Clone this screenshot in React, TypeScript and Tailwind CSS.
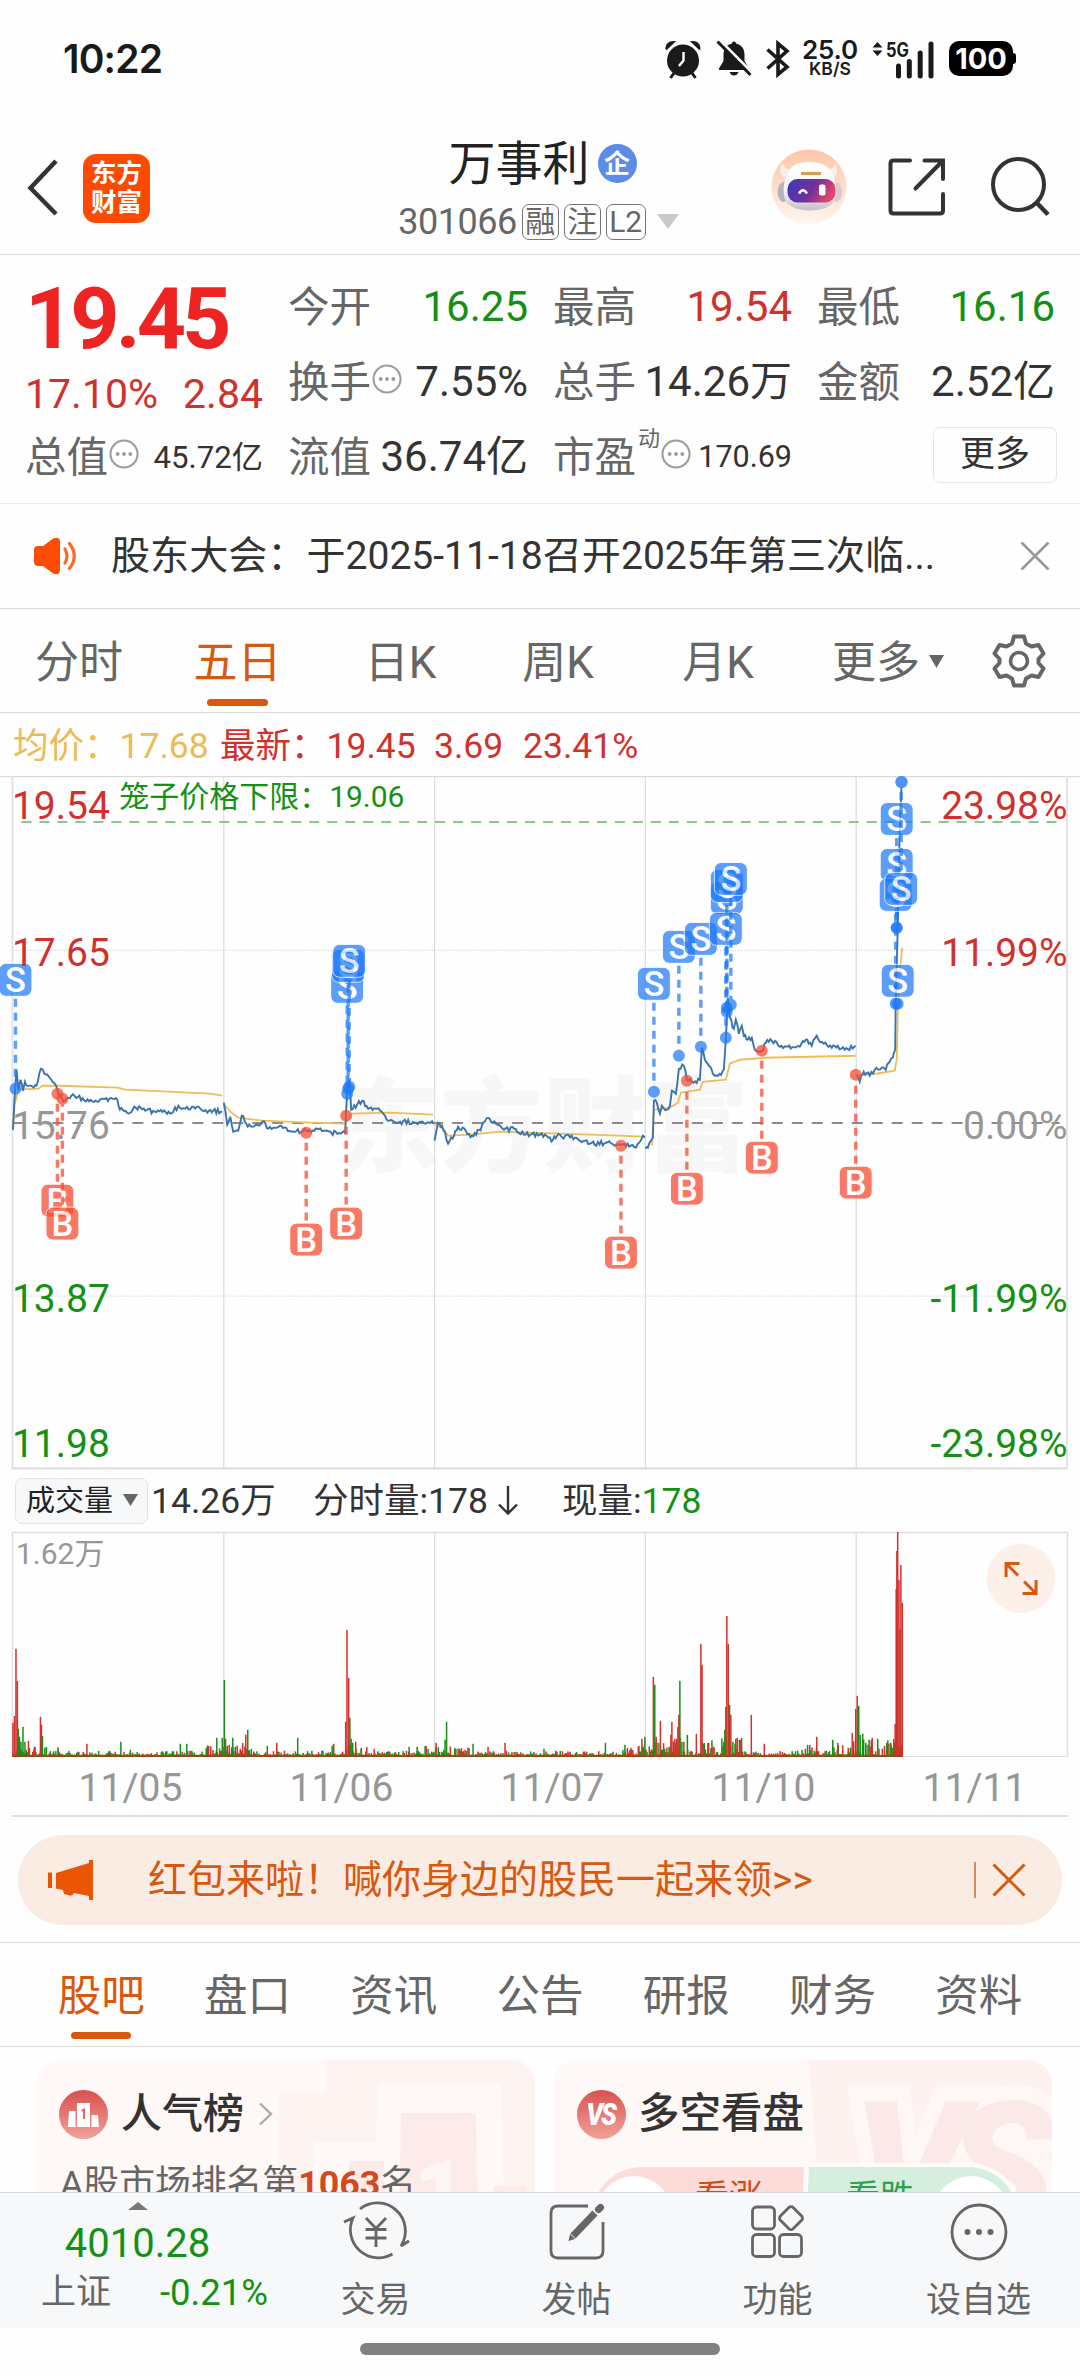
import React from "react";

const FONT = "font-[Roboto,'Noto_Sans_CJK_SC',sans-serif]";
const RED = "#d0312d";
const GREEN = "#149114";

/* Deterministic pseudo random numbers in the range 0..1 */
function rng(seed: number) {
  let s = seed;
  return () => {
    s = (s * 1664525 + 1013904223) % 4294967296;
    return s / 4294967296;
  };
}

/* Turns sparse key points into a minute-by-minute price path */
function jagged(points: number[][], seed: number, amp: number) {
  const rand = rng(seed);
  const out: string[] = [];
  for (let i = 0; i < points.length - 1; i++) {
    const [x0, y0] = points[i];
    const [x1, y1] = points[i + 1];
    const n = Math.max(1, Math.round((x1 - x0) / 1.6));
    for (let k = 0; k < n; k++) {
      const t = k / n;
      const noise = k === 0 ? 0 : (rand() - 0.5) * amp;
      out.push(`${(x0 + (x1 - x0) * t).toFixed(1)},${(y0 + (y1 - y0) * t + noise).toFixed(1)}`);
    }
  }
  const last = points[points.length - 1];
  out.push(`${last[0]},${last[1]}`);
  return out.join(" ");
}

const PRICE: number[][][] = [
  [[12.5, 1130], [14, 1100], [16, 1070], [18, 1090], [20, 1080], [22.5, 1091], [24.5, 1082], [27, 1086], [32, 1087], [36, 1086], [40.5, 1069], [44, 1074], [47, 1075], [52, 1082], [57, 1090], [63, 1102], [68, 1098], [74, 1096], [84, 1101], [95, 1101], [117, 1100], [119.5, 1110], [130, 1113], [134, 1107], [145, 1111], [173, 1112], [178, 1106], [185, 1109], [200, 1109], [207, 1113], [213, 1111], [222, 1112]],
  [[223.5, 1103], [227, 1125], [230, 1117], [233, 1132], [238, 1131], [241.5, 1116], [246, 1124], [252, 1127], [262, 1122], [268, 1129], [281, 1126], [291, 1132], [306, 1131], [325, 1131], [331, 1133], [345, 1133], [346, 1110], [347.5, 1085], [349.5, 1082], [351, 1110], [357, 1105], [362, 1101], [368, 1109], [380, 1111], [388, 1121], [400, 1122], [416, 1123], [433.5, 1124]],
  [[434.5, 1141], [438, 1123], [442, 1126], [448, 1144], [454, 1136], [458, 1127], [472, 1136], [476, 1135], [488, 1118], [496, 1124], [504, 1130], [514, 1129], [524, 1135], [540, 1135], [553, 1140], [557, 1136], [575, 1138], [590, 1144], [606, 1143], [621, 1145], [636, 1148], [643, 1136], [645, 1138]],
  [[645.5, 1149], [648, 1148], [651, 1141], [653, 1138], [654, 1101], [657, 1103], [660, 1114], [662, 1106], [667, 1110], [670, 1106], [672, 1091], [676, 1094], [679, 1069], [684, 1066], [687, 1080], [692, 1082], [700, 1080], [702, 1048], [705, 1060], [709, 1066], [713, 1074], [720, 1074], [724, 1070], [726, 1040], [728, 998], [730, 1018], [734, 1029], [736, 1020], [739, 1034], [742, 1026], [744, 1036], [748, 1040], [752, 1038], [755, 1050], [762, 1051], [766, 1043], [772, 1041], [780, 1047], [788, 1047], [800, 1047], [806, 1040], [812, 1046], [817, 1036], [824, 1044], [832, 1048], [838, 1046], [845, 1050], [856, 1046]],
  [[857, 1075], [860, 1082], [864, 1072], [870, 1076], [875, 1070], [882, 1068], [886, 1070], [890, 1062], [893, 1058], [895.5, 1050], [896, 1005], [898, 930], [900, 830], [902, 782]],
];

const AVERAGE = [
  "12.5,1130 14,1105 18,1090 38,1089 42,1086 60,1086 117,1088 125,1090 210,1094 222,1096",
  "223.5,1104 230,1112 238,1118 262,1121 310,1123 345,1124 351,1114 390,1113 433,1115",
  "434.5,1124 444,1130 448,1136 470,1135 500,1132 590,1135 645,1137",
  "652,1146 654,1110 670,1108 678,1103 681,1093 700,1090 703,1082 726,1080 730,1064 740,1060 765,1058 856,1056",
  "857,1076 864,1075 876,1074 895,1071 897,1060 899,980 902.5,948",
];

type Marker = { x: number; y: number; dot: number };
const SELLS: Marker[] = [
  { x: 15, y: 980, dot: 1089 },
  { x: 347, y: 987, dot: 1094 },
  { x: 348, y: 966, dot: 1089 },
  { x: 349, y: 961, dot: 1087 },
  { x: 654, y: 984, dot: 1092 },
  { x: 679, y: 947, dot: 1056 },
  { x: 701, y: 939, dot: 1047 },
  { x: 727, y: 898, dot: 1008 },
  { x: 726, y: 929, dot: 1038 },
  { x: 727, y: 886, dot: 1012 },
  { x: 731, y: 879, dot: 1005 },
  { x: 897, y: 819, dot: 928 },
  { x: 897, y: 865, dot: 928 },
  { x: 896, y: 895, dot: 1004 },
  { x: 901.5, y: 889, dot: 782 },
  { x: 898, y: 981, dot: 1004 },
];
const BUYS: Marker[] = [
  { x: 57, y: 1201, dot: 1094 },
  { x: 62, y: 1224, dot: 1099 },
  { x: 306, y: 1240, dot: 1133 },
  { x: 346, y: 1224, dot: 1116 },
  { x: 621, y: 1253, dot: 1146 },
  { x: 687, y: 1189, dot: 1081 },
  { x: 762, y: 1158, dot: 1051 },
  { x: 856, y: 1183, dot: 1075 },
];

function TradeMarker({ m, kind }: { m: Marker; kind: "S" | "B" }) {
  const color = kind === "S" ? "#1f7af9" : "#f84c33";
  const edge = m.dot > m.y ? m.y + 19 : m.y - 19;
  return (
    <g opacity={kind === "S" ? 0.72 : 0.74}>
      <line x1={m.x} x2={m.x} y1={edge} y2={m.dot} stroke={color} strokeWidth="3.4" strokeDasharray="8 6" />
      <circle cx={m.x} cy={m.dot} r="6" fill={color} />
      <rect x={m.x - 16.5} y={m.y - 16.5} width="33" height="33" rx="7" fill={color} stroke="#fff" strokeWidth="1" />
      <text x={m.x} y={m.y + 12.3} textAnchor="middle" fontSize="34.5" fontWeight="500" fill="#fff">
        {kind}
      </text>
    </g>
  );
}

const DAY_LINES = [223.5, 434.5, 645.5, 856.5];

function PriceChart() {
  const labels: [string, string, number, string][] = [
    ["19.54", "23.98%", 819, RED],
    ["17.65", "11.99%", 966, RED],
    ["15.76", "0.00%", 1139, "#979797"],
    ["13.87", "-11.99%", 1312, GREEN],
    ["11.98", "-23.98%", 1458, GREEN],
  ];
  return (
    <svg className="block h-[694px] w-[1080px]" viewBox="0 776 1080 694">
      <text x="337" y="1164" fontSize="103" fontWeight="900" fill="#f7f7f7">东方财富</text>
      <g stroke="#dcdcdc" strokeWidth="1.2">
        {DAY_LINES.map((x) => (
          <line key={x} x1={x} x2={x} y1="776" y2="1469" />
        ))}
        <line x1="12" x2="1068" y1="950.5" y2="950.5" strokeDasharray="1.5 1.5" />
        <line x1="12" x2="1068" y1="1296.5" y2="1296.5" strokeDasharray="1.5 1.5" />
      </g>
      <path d="M0 776.5H1080" stroke="#dadada" strokeWidth="1.4" />
      <path d="M12 776V1469M1067.5 776V1469" stroke="#e2e2e2" strokeWidth="1.8" />
      <path d="M12 1469H1068" stroke="#d6d6d6" strokeWidth="1.8" />
      <line x1="12" x2="1060" y1="1123.3" y2="1123.3" stroke="#8b8b8b" strokeWidth="1.8" strokeDasharray="11 9" />
      <line x1="21" x2="1058" y1="822" y2="822" stroke="#69b169" strokeWidth="1.6" strokeDasharray="10 8" />
      {AVERAGE.map((p) => (
        <polyline key={p} points={p} fill="none" stroke="#eebd57" strokeWidth="1.8" />
      ))}
      {PRICE.map((p, i) => (
        <polyline key={i} points={jagged(p, 17 + i * 31, 5)} fill="none" stroke="#3a74ad" strokeWidth="1.9" />
      ))}
      {SELLS.map((m, i) => (
        <TradeMarker key={i} m={m} kind="S" />
      ))}
      <circle cx="902" cy="782" r="6" fill="#4d92f5" />
      {BUYS.map((m, i) => (
        <TradeMarker key={i} m={m} kind="B" />
      ))}
      {labels.map(([price, pct, y, color]) => (
        <g key={price} fontSize="39" fill={color}>
          <text x="11.5" y={y}>{price}</text>
          <text x="1068" y={y} textAnchor="end">{pct}</text>
        </g>
      ))}
      <text x="119" y="807.5" fontSize="30" fill={GREEN}>笼子价格下限：19.06</text>
    </svg>
  );
}

/* x, height, colour (1 = up, 0 = down) */
const SPIKES: [number, number, number][] = [
  [12.5, 34, 1], [14, 41, 1], [17.8, 28, 0], [16.9, 76, 1], [15.5, 108, 1], [19, 20, 0], [20.5, 15, 0], [22.5, 30, 0], [24.5, 15, 0], [28, 16, 1], [34, 10, 1], [40, 40, 1], [41, 32, 1], [42, 21, 0], [46, 10, 0], [58, 7, 0], [86.5, 13, 1], [120.5, 15, 0], [130, 7, 0], [180, 13, 0], [186.5, 13, 0], [206, 9, 0], [216.5, 19, 0], [222, 19, 0], [224, 77, 0], [225.3, 18, 1], [229, 12, 1], [232.5, 19, 0], [235, 10, 0], [240, 8, 1], [245.5, 22, 1], [247.5, 27, 0], [251, 8, 0], [267, 11, 0], [276.5, 14, 1], [297.5, 19, 0], [332, 11, 0], [333.5, 13, 1], [345.5, 35, 1], [346.8, 127, 1], [348.5, 79, 1], [349.7, 39, 0], [351, 18, 0], [352.5, 14, 0], [355.5, 15, 1], [361, 8, 0], [374, 8, 1], [409, 10, 0], [417, 10, 0], [428, 8, 0], [436, 14, 1], [445, 17, 0], [446.5, 35, 0], [465, 7, 1], [473, 13, 0], [488, 10, 1], [505, 14, 1], [516, 5, 0],
  [544, 8, 0], [556, 6, 1], [605.5, 14, 0], [625, 12, 0], [631, 9, 1], [639, 11, 1], [642, 18, 1], [645, 20, 0], [653.5, 80, 1], [654.9, 72, 0], [656.3, 20, 1], [660.5, 36, 1], [671, 22, 1], [672, 35, 1], [675, 18, 1], [678, 30, 1], [679, 42, 1], [680, 76, 0], [682, 15, 0], [684, 15, 1], [687.5, 22, 0], [696.5, 23, 1], [702.2, 92, 1], [701, 113, 1], [704, 13, 0], [708, 14, 1], [724, 15, 1], [725, 27, 0], [726, 50, 1], [728.4, 113, 1], [727, 141, 1], [729.7, 52, 0], [731, 42, 1], [733, 15, 0], [736, 18, 1], [741, 17, 1], [751.5, 42, 1], [764.5, 13, 1], [817, 20, 1], [833, 17, 0], [838, 14, 1], [852.5, 24, 1], [856, 48, 1], [857.5, 61, 1], [859, 51, 0], [860.5, 22, 0], [863, 23, 0], [866, 14, 0], [872.5, 19, 1], [878, 18, 0], [891, 14, 0], [894, 18, 1], [895.5, 33, 1], [896.5, 168, 1], [897.2, 206, 1], [898, 225, 1], [899.3, 177, 1], [902.6, 154, 1], [901.2, 192, 1],
];

/* Busy stretches of the session: start, end, typical height */
const BUSY: [number, number, number][] = [
  [12, 60, 9], [200, 223, 11], [223, 250, 11], [345, 370, 9], [425, 470, 8], [620, 646, 8], [646, 690, 16], [700, 716, 14], [722, 742, 16], [800, 856, 10], [840, 904, 14],
];

function baseVolume() {
  const rand = rng(91);
  const bars: [number, number, number][] = [];
  for (let x = 12.5; x < 903; x += 1.1) {
    let top = 3.8;
    for (const [a, b, h] of BUSY) if (x >= a && x <= b) top = Math.max(top, h);
    const r = rand();
    bars.push([x, 1.8 + top * r * r * 1.15, rand() > 0.5 ? 1 : 0]);
  }
  return bars;
}

function VolumeChart() {
  return (
    <svg className="block h-[227px] w-[1080px]" viewBox="0 1531 1080 227">
      <g stroke="#dcdcdc" strokeWidth="1.2">
        {DAY_LINES.map((x) => (
          <line key={x} x1={x} x2={x} y1="1532" y2="1757" />
        ))}
      </g>
      <path d="M12 1532.5H1068V1757H12Z" fill="none" stroke="#e0e0e0" strokeWidth="1.6" />
      {[...baseVolume(), ...SPIKES].map(([x, h, up], i) => (
        <rect key={i} x={x - 0.75} y={1757 - h} width="1.5" height={h} fill={up ? "#d62f2b" : "#159015"} />
      ))}
      <rect x="899.6" y="1629" width="1.5" height="128" fill="#b2401d" />
      <path d="M12 1756.5H903" stroke="#8a4a1a" strokeWidth="1.6" />
      <text x="15.5" y="1564" fontSize="30" fill="#979797">1.62万</text>
      <circle cx="1021.5" cy="1578.5" r="34.5" fill="#fdf0e8" />
      <path d="M1006.5 1577V1563.5H1020M1006.5 1563.5L1018.5 1575.5M1036.5 1580V1593.5H1023M1036.5 1593.5L1024.5 1581.5" fill="none" stroke="#d9580f" strokeWidth="3" />
    </svg>
  );
}

function InfoDot({ className = "" }: { className?: string }) {
  return (
    <svg className={`h-[30px] w-[30px] shrink-0 ${className}`} viewBox="0 0 30 30">
      <circle cx="15" cy="15" r="13.5" fill="none" stroke="#9b9b9b" strokeWidth="2" />
      <g fill="#9b9b9b">
        <circle cx="8.7" cy="15" r="1.9" />
        <circle cx="15" cy="15" r="1.9" />
        <circle cx="21.3" cy="15" r="1.9" />
      </g>
    </svg>
  );
}

function StatusBar() {
  return (
    <div className="flex h-[118px] items-center justify-between pr-[65px] pl-[63px] text-[#1a1a1a]">
      <div className="font-[Inter,sans-serif] text-[39px] leading-none font-semibold tracking-[-0.8px]">10:22</div>
      <div className="flex h-[40px] items-center">
        <svg className="h-[40px] w-[38px]" viewBox="0 0 38 40">
          <circle cx="19" cy="21.5" r="16" fill="#1a1a1a" />
          <path d="M1.500 10.500C1 4 6 .8 12 2.200L2.800 11ZM36.500 10.500C37 4 32 .8 26 2.200L35.200 11Z" fill="#1a1a1a" />
          <path d="M10 34L6.500 39M28 34L31.500 39" stroke="#1a1a1a" strokeWidth="3" />
          <path d="M19.500 13V21.500L15 27" fill="none" stroke="#fff" strokeWidth="2.400" />
        </svg>
        <svg className="ml-[14px] h-[40px] w-[36px]" viewBox="0 0 36 40">
          <path d="M18 2.500C19.500 2.500 20 3.500 20 4.500C26 6 28.500 10 28.500 16V22L33 29.500V31H3V29.500L7.500 22V16C7.500 10 10 6 16 4.500C16 3.500 16.500 2.500 18 2.500Z" fill="#1a1a1a" />
          <path d="M13.500 33H22.500Q21 36.500 18 36.500T13.500 33Z" fill="#1a1a1a" />
          <path d="M3 .500L37 34.500" stroke="#fff" strokeWidth="3" />
          <path d="M1.500 2.500L34.500 36" stroke="#1a1a1a" strokeWidth="3" />
        </svg>
        <svg className="ml-[13px] h-[40px] w-[26px]" viewBox="0 0 26 40">
          <path d="M2.500 10.500L22 28L13 35.500V4.500L22 12L2.500 29.500" fill="none" stroke="#1a1a1a" strokeWidth="3.600" />
        </svg>
        <div className="ml-[10px] flex w-[58px] flex-col items-center font-[Inter,sans-serif] leading-none font-semibold">
          <span className="text-[26px] leading-[21px] tracking-[-0.2px]">25.0</span>
          <span className="text-[17.500px] leading-[18px] font-semibold">KB/S</span>
        </div>
        <svg className="ml-[12px] h-[40px] w-[64px]" viewBox="0 0 64 40">
          <path d="M1.500 8.500L6.500 3L11.500 8.500ZM1.500 11.500L6.500 17L11.500 11.500Z" fill="#1a1a1a" />
          <text x="15" y="17.500" fontSize="19.500" fontWeight="700" fill="#1a1a1a" textLength="23" lengthAdjust="spacingAndGlyphs" className="font-[Inter,sans-serif]">5G</text>
          <path d="M27.500 27V37M38.300 22.500V37M49.200 14V37M60 5V37" stroke="#1a1a1a" strokeWidth="5" strokeLinecap="round" />
        </svg>
        <div className="mr-[-1px] ml-[14px] flex items-center">
          <div className="flex h-[35px] w-[64px] items-center justify-center rounded-[10px] bg-black font-[Inter,sans-serif] text-[29px] leading-none font-bold text-white">100</div>
          <div className="h-[11px] w-[3px] rounded-r-sm bg-black" />
        </div>
      </div>
    </div>
  );
}

function Header() {
  return (
    <div className="flex h-[137px] items-start border-b-[1.500px] border-[#d8d8d8]">
      <div className="flex w-[385px] items-center pt-[34px] pl-[26px]">
        <svg className="h-[58px] w-[34px]" viewBox="0 0 34 58">
          <path d="M30 3L4.500 30L30 56" fill="none" stroke="#333" strokeWidth="4.500" />
        </svg>
        <div className="mt-[2px] ml-[23px] flex h-[69px] w-[67px] flex-col items-center justify-center rounded-[13px] bg-[#fd4a02] text-[25.500px] leading-[29px] font-bold text-white">
          <span>东方</span>
          <span>财富</span>
        </div>
      </div>
      <div className="flex w-[310px] flex-col items-center pt-[16px]">
        <div className="ml-[5px] flex items-center">
          <span className="text-[47px] leading-[60px] text-[#222]">万事利</span>
          <span className="ml-[8px] flex h-[39px] w-[39px] items-center justify-center rounded-full bg-[#5c8be8] text-[26px] leading-none font-bold text-white">企</span>
        </div>
        <div className="mt-[8px] ml-[-3px] flex items-center text-[#666]">
          <span className="text-[36px] leading-[40px] tracking-[-0.5px]">301066</span>
          <span className="ml-[5px] flex h-[36px] w-[37px] items-center justify-center rounded-[7px] border border-[#777] text-[30px] leading-none">融</span>
          <span className="ml-[5px] flex h-[36px] w-[37px] items-center justify-center rounded-[7px] border border-[#777] text-[30px] leading-none">注</span>
          <span className="ml-[5px] flex h-[36px] w-[40px] items-center justify-center rounded-[7px] border border-[#777] text-[30px] leading-none">L2</span>
          <svg className="ml-[11px] h-[15px] w-[22px]" viewBox="0 0 22 15">
            <path d="M0 0H22L11 15Z" fill="#c9c9c9" />
          </svg>
        </div>
      </div>
      <svg className="mt-[31px] ml-[76px] h-[76px] w-[76px]" viewBox="0 0 76 76">
        <defs>
          <linearGradient id="halo" x1="0" y1="0" x2="0" y2="1">
            <stop offset="0" stopColor="#fdc6a8" />
            <stop offset="1" stopColor="#fff5f0" />
          </linearGradient>
          <linearGradient id="visor" x1="0" y1="0" x2="1" y2="0.300">
            <stop offset="0" stopColor="#3a3ab8" />
            <stop offset="0.600" stopColor="#742f9c" />
            <stop offset="1" stopColor="#e0456a" />
          </linearGradient>
          <linearGradient id="shell" x1="0" y1="0" x2="0" y2="1">
            <stop offset="0" stopColor="#fff" />
            <stop offset="0.600" stopColor="#f6f2f4" />
            <stop offset="1" stopColor="#c4c0c8" />
          </linearGradient>
        </defs>
        <circle cx="38" cy="38" r="37.500" fill="url(#halo)" />
        <path d="M12 14Q6 22 13 29L20 21Q13 20 12 14ZM64 14Q69 22 63 29L56 21Q63 20 64 14Z" fill="#f7eeee" />
        <ellipse cx="12.500" cy="43" rx="6" ry="10" fill="#b7b2bb" />
        <ellipse cx="65.500" cy="43" rx="5.500" ry="10" fill="#d8ccd2" />
        <path d="M38 13C52 13 60 18 63 28C66 38 66 50 61 55Q54 61 38 61.500Q24 61 17 55C11 49 12 36 15 28C19 17 25 13 38 13Z" fill="url(#shell)" />
        <rect x="16.500" y="30" width="48" height="23.500" rx="10" fill="url(#visor)" />
        <path d="M28 44.500Q32 38 36 44.500" fill="none" stroke="#fff" strokeWidth="2.500" />
        <rect x="48" y="35.500" width="6.500" height="11" rx="2" fill="#fff" />
        <path d="M30 24.500H50" stroke="#d99a56" strokeWidth="3" />
      </svg>
      <svg className="mt-[39px] ml-[40px] h-[60px] w-[60px]" viewBox="0 0 60 60">
        <path d="M23 3.500H6.500Q3.500 3.500 3.500 6.500V53.500Q3.500 56.500 6.500 56.500H53Q56 56.500 56 53.500V37M37.500 3.500H56V22M56 3.500L28.500 31.500" fill="none" stroke="#333" strokeWidth="4" strokeLinecap="round" />
      </svg>
      <svg className="mt-[38px] ml-[41px] h-[62px] w-[62px]" viewBox="0 0 62 62">
        <circle cx="30.500" cy="28.500" r="25.500" fill="none" stroke="#333" strokeWidth="4" />
        <path d="M48.500 46.500L60 58.500" stroke="#333" strokeWidth="4.500" />
      </svg>
    </div>
  );
}

function Stat({ label, value, color = "text-[#333]", info = false, size = "text-[42px]", sup }: { label: string; value: string; color?: string; info?: boolean; size?: string; sup?: string }) {
  return (
    <div className="flex h-[75px] items-center justify-between">
      <div className="flex items-center text-[41.500px] leading-none text-[#666]">
        {label}
        {sup && <span className="mt-[-36px] ml-[2px] text-[22px]">{sup}</span>}
        {info && <InfoDot className="mt-[-7px] ml-[1px]" />}
      </div>
      <span className={`leading-none whitespace-nowrap ${size} ${color}`}>{value}</span>
    </div>
  );
}

function Quote() {
  return (
    <div className="grid h-[249px] grid-cols-[238px_240px_239px_238px] gap-x-[25px] border-b-[1.500px] border-[#ececec] pt-[15px] pl-[25px]">
      <div>
        <div className="flex h-[99px] items-center text-[86px] leading-none font-bold tracking-[-4px] text-[#ee2424]">19.45</div>
        <div className="flex h-[51px] items-center justify-between text-[41px] leading-none text-[#d0312d]">
          <span>17.10%</span>
          <span>2.84</span>
        </div>
        <Stat label="总值" value="45.72亿" info size="text-[31.200px]" />
      </div>
      <div>
        <Stat label="今开" value="16.25" color="text-[#149114]" />
        <Stat label="换手" value="7.55%" info />
        <Stat label="流值" value="36.74亿" />
      </div>
      <div>
        <Stat label="最高" value="19.54" color="text-[#d0312d]" />
        <Stat label="总手" value="14.26万" />
        <Stat label="市盈" value="170.69" info size="text-[30.500px]" sup="动" />
      </div>
      <div>
        <Stat label="最低" value="16.16" color="text-[#149114]" />
        <Stat label="金额" value="2.52亿" />
        <div className="flex h-[75px] items-center justify-end">
          <div className="mt-[-5px] mr-[-2px] flex h-[56px] w-[124px] items-center justify-center rounded-[7px] border-[1.500px] border-[#e3e5e6] text-[35px] leading-none text-[#333]">更多</div>
        </div>
      </div>
    </div>
  );
}

function Notice() {
  return (
    <div className="flex h-[106px] items-center border-b-[1.500px] border-[#d8d8d8] pr-[30px] pl-[33px]">
      <svg className="h-[38px] w-[46px]" viewBox="0 0 46 38">
        <path d="M5 9H10L20 1.500Q27 -1 27 5V33Q27 39 20 36.500L10 29H5Q1 29 1 25V13Q1 9 5 9Z" fill="#fd4d05" />
        <path d="M32 12Q36 19 32 26M36.500 6.500Q46 19 36.500 31.500" fill="none" stroke="#fd6a2c" strokeWidth="3.200" strokeLinecap="round" />
      </svg>
      <div className="ml-[32px] flex-1 pt-[2px] text-[39.100px] leading-none whitespace-nowrap text-[#333]">股东大会：于2025-11-18召开2025年第三次临...</div>
      <svg className="h-[30px] w-[30px]" viewBox="0 0 30 30">
        <path d="M1.500 1.500L28.500 28.500M28.500 1.500L1.500 28.500" stroke="#999" strokeWidth="2.600" />
      </svg>
    </div>
  );
}

function PeriodTabs() {
  const items: [string, string][] = [
    ["分时", "w-[158px]"],
    ["五日", "w-[159px]"],
    ["日K", "w-[167px]"],
    ["周K", "w-[148px]"],
    ["月K", "w-[172px]"],
  ];
  return (
    <div className="flex h-[104px] items-center border-b-[1.500px] border-[#d8d8d8] text-[44px] leading-none text-[#666]">
      {items.map(([t, w], i) => (
        <div key={t} className={`relative flex h-full items-center justify-center pt-[4px] ${w} ${i === 1 ? "text-[#d9580f]" : ""}`}>
          {t}
          {i === 1 && <span className="absolute bottom-[6px] h-[7px] w-[61px] rounded-full bg-[#d9580f]" />}
        </div>
      ))}
      <div className="ml-[28px] flex items-center pt-[4px]">
        更多
        <svg className="mt-[-3px] ml-[9px] h-[13px] w-[15px]" viewBox="0 0 15 13">
          <path d="M0 0H15L7.500 13Z" fill="#666" />
        </svg>
      </div>
      <svg className="ml-[48px] h-[54px] w-[54px]" viewBox="0 0 54 54">
        <path d="M22 2.500H32L34 9.500L39.500 12.500L46.500 11L51.500 19.500L46.500 25V29L51.500 34.500L46.500 43L39.500 41.500L34 44.500L32 51.500H22L20 44.500L14.500 41.500L7.500 43L2.500 34.500L7.500 29V25L2.500 19.500L7.500 11L14.500 12.500L20 9.500Z" fill="none" stroke="#666" strokeWidth="4" strokeLinejoin="round" />
        <circle cx="27" cy="27" r="8.500" fill="none" stroke="#666" strokeWidth="3.600" />
      </svg>
    </div>
  );
}

function Legend() {
  return (
    <div className="flex h-[63px] items-center pt-[3px] pl-[13px] text-[35.500px] leading-none text-[#d0312d]">
      <span className="w-[207px] whitespace-nowrap text-[#edbb55]">均价：17.68</span>
      <span className="w-[214px] whitespace-nowrap">最新：19.45</span>
      <span className="w-[89px]">3.69</span>
      <span>23.41%</span>
    </div>
  );
}

function VolumeBar() {
  return (
    <div className="flex h-[61px] items-center pt-[1px] pl-[15px] text-[35.500px] leading-none text-[#333]">
      <div className="flex h-[46px] w-[133px] items-center rounded-[7px] border border-[#e3e4e8] bg-[#f7f8fa] pt-[2px] pl-[10px] text-[29px] text-[#222]">
        成交量
        <svg className="mt-[-3px] ml-[10px] h-[12px] w-[15px]" viewBox="0 0 15 12">
          <path d="M0 0H15L7.500 12Z" fill="#666" />
        </svg>
      </div>
      <span className="ml-[3px] w-[162px] pt-[2px]">14.26万</span>
      <span className="w-[184px] pt-[2px]">分时量:178</span>
      <svg className="h-[31px] w-[22px]" viewBox="0 0 22 31">
        <path d="M11 1V28M2 19.500L11 28.500L20 19.500" fill="none" stroke="#333" strokeWidth="2.400" />
      </svg>
      <span className="ml-[43px] pt-[2px]">
        现量:<span className="text-[#149114]">178</span>
      </span>
    </div>
  );
}

function Banner() {
  return (
    <div className="h-[126px] border-b-[1.500px] border-[#d8d8d8] pt-[18px]">
      <div className="mx-[18px] flex h-[90px] items-center rounded-full bg-[#fbece3] text-[#d9580f]">
        <svg className="ml-[30px] h-[40px] w-[46px]" viewBox="0 0 46 40">
          <path d="M0 12.500H4V28H0ZM8 13L41 3V0H45V40H41V36L26 33Q24 37 20 35L16 34L15 30L8 28.500Z" fill="#ea5504" />
        </svg>
        <div className="ml-[54px] w-[826px] text-[39px] leading-none whitespace-nowrap">红包来啦！喊你身边的股民一起来领&gt;&gt;</div>
        <div className="h-[36px] w-[2px] bg-[#d98a60]" />
        <svg className="ml-[16px] h-[34px] w-[34px]" viewBox="0 0 34 34">
          <path d="M1.500 1.500L32.500 32.500M32.500 1.500L1.500 32.500" stroke="#d9580f" strokeWidth="3" />
        </svg>
      </div>
    </div>
  );
}

function InfoTabs() {
  return (
    <div className="grid h-[104px] grid-cols-7 border-b-[1.500px] border-[#d8d8d8] px-[28px] text-[43.500px] leading-none text-[#666]">
      {["股吧", "盘口", "资讯", "公告", "研报", "财务", "资料"].map((t, i) => (
        <div key={t} className={`relative flex items-center justify-center pt-[4px] ${i === 0 ? "text-[#d9580f]" : ""}`}>
          {t}
          {i === 0 && <span className="absolute bottom-[7px] h-[7px] w-[60px] rounded-full bg-[#d9580f]" />}
        </div>
      ))}
    </div>
  );
}

function Cards() {
  return (
    <div className="flex h-[145px] gap-[18px] overflow-hidden px-[36px] pt-[13px]">
      <div className="relative h-[220px] w-[499px] shrink-0 overflow-hidden rounded-[24px] bg-[#fef8f6]">
        <svg className="absolute inset-0 h-[220px] w-[499px]" viewBox="0 0 499 220">
          <path d="M290 0H499V220H243V32H290Z" fill="#fdf3f1" />
          <path d="M342 24H465L470 220H278V82H340Z" fill="#fef8f6" />
          <path d="M365 53H440L443 220H362ZM313 101H348V220H311ZM458 126H490V220H458Z" fill="#fcebe9" />
          <path d="M415 99V220H400V118L385 122V110Z" fill="#fef6f4" />
        </svg>
        <div className="relative pt-[29px] pl-[23px]">
          <div className="flex h-[50px] items-center text-[41px] leading-none font-medium text-[#333]">
            <svg className="h-[49px] w-[49px]" viewBox="0 0 49 49">
              <defs>
                <linearGradient id="badge" x1="0" y1="0" x2="0" y2="1">
                  <stop offset="0" stopColor="#d9504e" />
                  <stop offset="1" stopColor="#f0a19a" />
                </linearGradient>
              </defs>
              <circle cx="24.500" cy="24.500" r="24.500" fill="url(#badge)" />
              <path d="M10 21H16.500V37H9ZM18 13H31V37H18ZM32.500 25H39L40 37H32.500Z" fill="#fff" />
              <path d="M22.500 21L25 19.500V29" fill="none" stroke="#dc6c68" strokeWidth="2" />
            </svg>
            <span className="ml-[13px]">人气榜</span>
            <svg className="ml-[14px] h-[24px] w-[16px]" viewBox="0 0 16 24">
              <path d="M2 1.500L13 12L2 22.500" fill="none" stroke="#aaa" strokeWidth="2.400" />
            </svg>
          </div>
          <div className="mt-[25px] pl-[1px] text-[35.800px] leading-[40px] whitespace-nowrap text-[#666]">
            A股市场排名第<b className="font-bold text-[#d3481c]">1063</b>名
          </div>
        </div>
      </div>
      <div className="relative h-[220px] w-[499px] shrink-0 overflow-hidden rounded-[24px] bg-[#fef8f6]">
        <svg className="absolute inset-0 h-[220px] w-[499px]" viewBox="0 0 499 220">
          <path d="M256 0H499V220H272Z" fill="#fdf2f0" />
          <text x="300" y="168" fontSize="178" fontWeight="900" fontStyle="italic" fill="#fbe9e7" stroke="#fef7f5" strokeWidth="30" paintOrder="stroke" letterSpacing="-20">VS</text>
          <rect x="33" y="103" width="437" height="110" rx="55" fill="#fffaf9" />
          <path d="M89 107H251L247 207H89A50 50 0 0 1 89 107Z" fill="#fcdcd8" />
          <path d="M256 107H415A50 50 0 0 1 415 207H252Z" fill="#d6eedd" />
          <circle cx="81" cy="154" r="38" fill="#fff" />
          <circle cx="418" cy="154" r="38" fill="#fff" />
        </svg>
        <div className="relative pt-[29px] pl-[24px]">
          <div className="flex h-[50px] items-center text-[41.500px] leading-none font-medium text-[#333]">
            <div className="flex h-[49px] w-[49px] items-center justify-center rounded-full bg-linear-to-b from-[#d9504e] to-[#f0a19a] text-[32px] font-black tracking-[-2.500px] text-white italic">
              <span className="-ml-[3px] scale-x-[.82]">VS</span>
            </div>
            <span className="ml-[12px]">多空看盘</span>
          </div>
          <div className="mt-[38px] flex text-[34px] leading-[40px]">
            <span className="ml-[118px] text-[#d3481c]">看涨</span>
            <span className="ml-[83px] text-[#2ea04f]">看跌</span>
          </div>
        </div>
      </div>
    </div>
  );
}

function NavItem({ label, children }: { label: string; children: React.ReactNode }) {
  return (
    <div className="flex w-[201px] flex-col items-center pt-[7px]">
      <svg className="h-[64px] w-[68px]" viewBox="0 0 68 64" fill="none" stroke="#666" strokeWidth="2.800">
        {children}
      </svg>
      <span className="mt-[17px] text-[35px] leading-[40px]">{label}</span>
    </div>
  );
}

function BottomNav() {
  return (
    <div className="flex h-[136px] border-t-[1.500px] border-[#d4d6d9] bg-[#f7f8fa] text-[#666]">
      <div className="flex w-[275px] flex-col items-center pt-[9px]">
        <svg className="h-[8px] w-[20px]" viewBox="0 0 20 8">
          <path d="M10 0L20 8H0Z" fill="#777" />
        </svg>
        <div className="mt-[14px] text-[40px] leading-[40px] text-[#149114]">4010.28</div>
        <div className="mt-[9px] ml-[41px] flex items-center self-start leading-[40px]">
          <span className="w-[119px] text-[35px]">上证</span>
          <span className="text-[36.500px] text-[#149114]">-0.21%</span>
        </div>
      </div>
      <NavItem label="交易">
        <path d="M18 9A28 28 0 0 1 59 46L67 41M50.500 54A28 28 0 0 1 11 18L2 22" />
        <path d="M24 18L34 28.500L44 18M34 28.500V47M23.500 29.500H44.500M23.500 38H44.500" />
      </NavItem>
      <NavItem label="发帖">
        <path d="M45 6H15Q8 6 8 13V51Q8 58 15 58H53Q60 58 60 51V22" />
        <path d="M30 36L52 13" strokeWidth="7" />
        <path d="M25.500 41L27 34L32 39Z" fill="#666" stroke="none" />
        <path d="M55.500 9.500L57.500 7.500" strokeWidth="7" strokeLinecap="round" />
      </NavItem>
      <NavItem label="功能">
        <rect x="8.500" y="7" width="22" height="22" rx="4" />
        <rect x="8.500" y="34.500" width="22" height="22" rx="4" />
        <rect x="35.500" y="34.500" width="22" height="22" rx="4" />
        <rect x="38" y="9.200" width="18" height="18" rx="3" transform="rotate(45 47 18.200)" />
      </NavItem>
      <NavItem label="设自选">
        <circle cx="34" cy="32" r="27" />
        <g fill="#666" stroke="none">
          <circle cx="22.500" cy="32" r="3" />
          <circle cx="34" cy="32" r="3" />
          <circle cx="45.500" cy="32" r="3" />
        </g>
      </NavItem>
    </div>
  );
}

export default function App() {
  return (
    <div className={`flex h-[2376px] w-[1080px] flex-col overflow-hidden bg-[#fefefe] ${FONT}`}>
      <StatusBar />
      <Header />
      <Quote />
      <Notice />
      <PeriodTabs />
      <Legend />
      <PriceChart />
      <VolumeBar />
      <VolumeChart />
      <div className="mr-[12px] ml-[12px] flex h-[60px] items-center border-b-2 border-[#e2e2e2] pl-[13px] text-[39px] leading-none text-[#979797]">
        {["11/05", "11/06", "11/07", "11/10", "11/11"].map((d) => (
          <span key={d} className="w-[211px] shrink-0 pt-[4px] text-center">{d}</span>
        ))}
      </div>
      <Banner />
      <InfoTabs />
      <Cards />
      <BottomNav />
      <div className="flex h-[48px] justify-center pt-[15px]">
        <div className="h-[12px] w-[360px] rounded-full bg-[#808080]" />
      </div>
    </div>
  );
}
